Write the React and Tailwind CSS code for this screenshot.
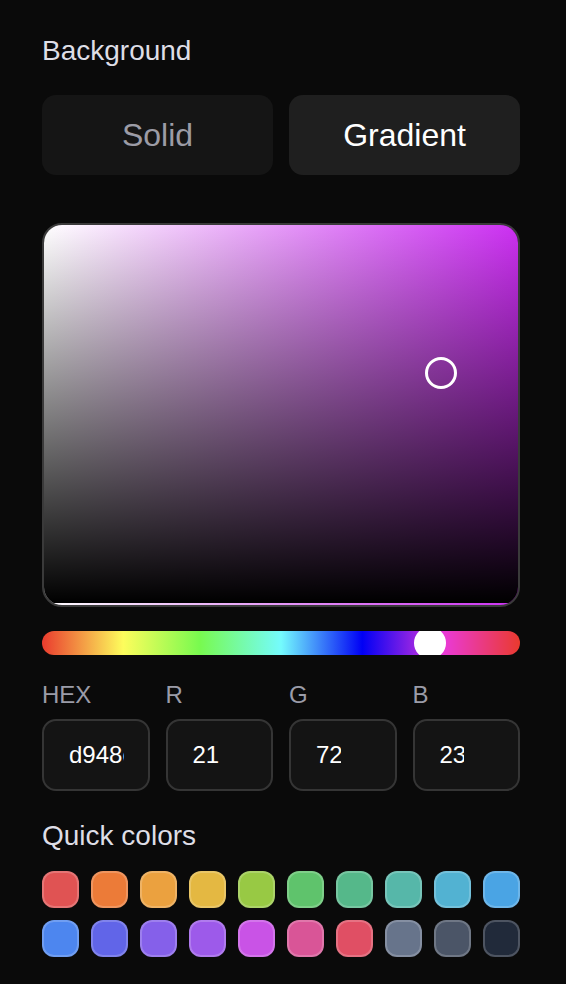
import React from "react";

const row1 = ["#e05353", "#ec7b38", "#eba13f", "#e4b842", "#98c944", "#5fc36c", "#55b88a", "#56b7a9", "#52b2d2", "#4aa4e4"];
const row2 = ["#4d86ef", "#6165e8", "#8560ea", "#9d5aea", "#c953e6", "#d95597", "#e04f64", "#67748b", "#4b5567", "#212a3a"];

function Field({ label, value, clip }) {
  return (
    <div className="flex flex-col">
      <div className="h-[32px] text-[24px] leading-[32px] text-[#9b9ca8]">{label}</div>
      <div className="mt-[8px] flex h-[72px] items-center rounded-[14px] border-2 border-[#353535] bg-[#141414] pl-[25px]">
        <div className={`overflow-hidden whitespace-nowrap text-[24px] leading-[28px] text-white ${clip}`}>{value}</div>
      </div>
    </div>
  );
}

export default function App() {
  return (
    <div className="min-h-screen bg-[#0a0a0a] pl-[42px] pr-[46px] pt-[31px] font-['Liberation_Sans',Arial,sans-serif]">
      <h2 className="text-[28px] leading-[40px] text-[#dedee6]">Background</h2>
      <div className="mt-[24px] grid grid-cols-2 gap-4">
        <button className="h-[80px] rounded-[14px] bg-[#151515] text-[32px] text-[#9c9ca6]">Solid</button>
        <button className="h-[80px] rounded-[14px] bg-[#1f1f1f] text-[32px] text-white">Gradient</button>
      </div>

      <div className="relative mt-[48px] h-[384px] overflow-hidden rounded-[20px] border-2 border-[#3a3a3a]">
        <div className="absolute inset-0 bg-[linear-gradient(to_right,#ffffff,#cc30f2)]" />
        <div className="absolute inset-x-0 top-0 bottom-[2px] bg-[linear-gradient(to_bottom,rgba(0,0,0,0),#000000)]" />
        <div className="absolute left-[83.7%] top-[39%] h-[32px] w-[32px] -translate-x-1/2 -translate-y-1/2 rounded-full border-[3px] border-white" />
      </div>

      <div className="relative mt-[24px] h-[24px] overflow-hidden rounded-full bg-[linear-gradient(to_right,#ea3b2e_0%,#fdfd5c_17%,#78fa4f_33%,#74fbfd_50%,#0000f5_67%,#ea3ad8_84%,#ea3a2e_100%)]">
        <div className="absolute left-[81.2%] top-[-4px] h-[32px] w-[32px] -translate-x-1/2 rounded-full bg-white" />
      </div>

      <div className="mt-[24px] grid grid-cols-4 gap-4">
        <Field label="HEX" value="d948ef" clip="w-[55px]" />
        <Field label="R" value="217" clip="w-[26px]" />
        <Field label="G" value="72" clip="w-[25px]" />
        <Field label="B" value="239" clip="w-[24px]" />
      </div>

      <div className="mt-[25px] text-[28px] leading-[40px] text-[#dedee6]">Quick colors</div>
      <div className="mt-[15px] grid grid-cols-10 gap-[12px]">
        {[...row1, ...row2].map((c, i) => (
          <div
            key={i}
            className="aspect-square rounded-[12px] border-2 border-white/20"
            style={{ backgroundColor: c }}
          />
        ))}
      </div>
    </div>
  );
}
